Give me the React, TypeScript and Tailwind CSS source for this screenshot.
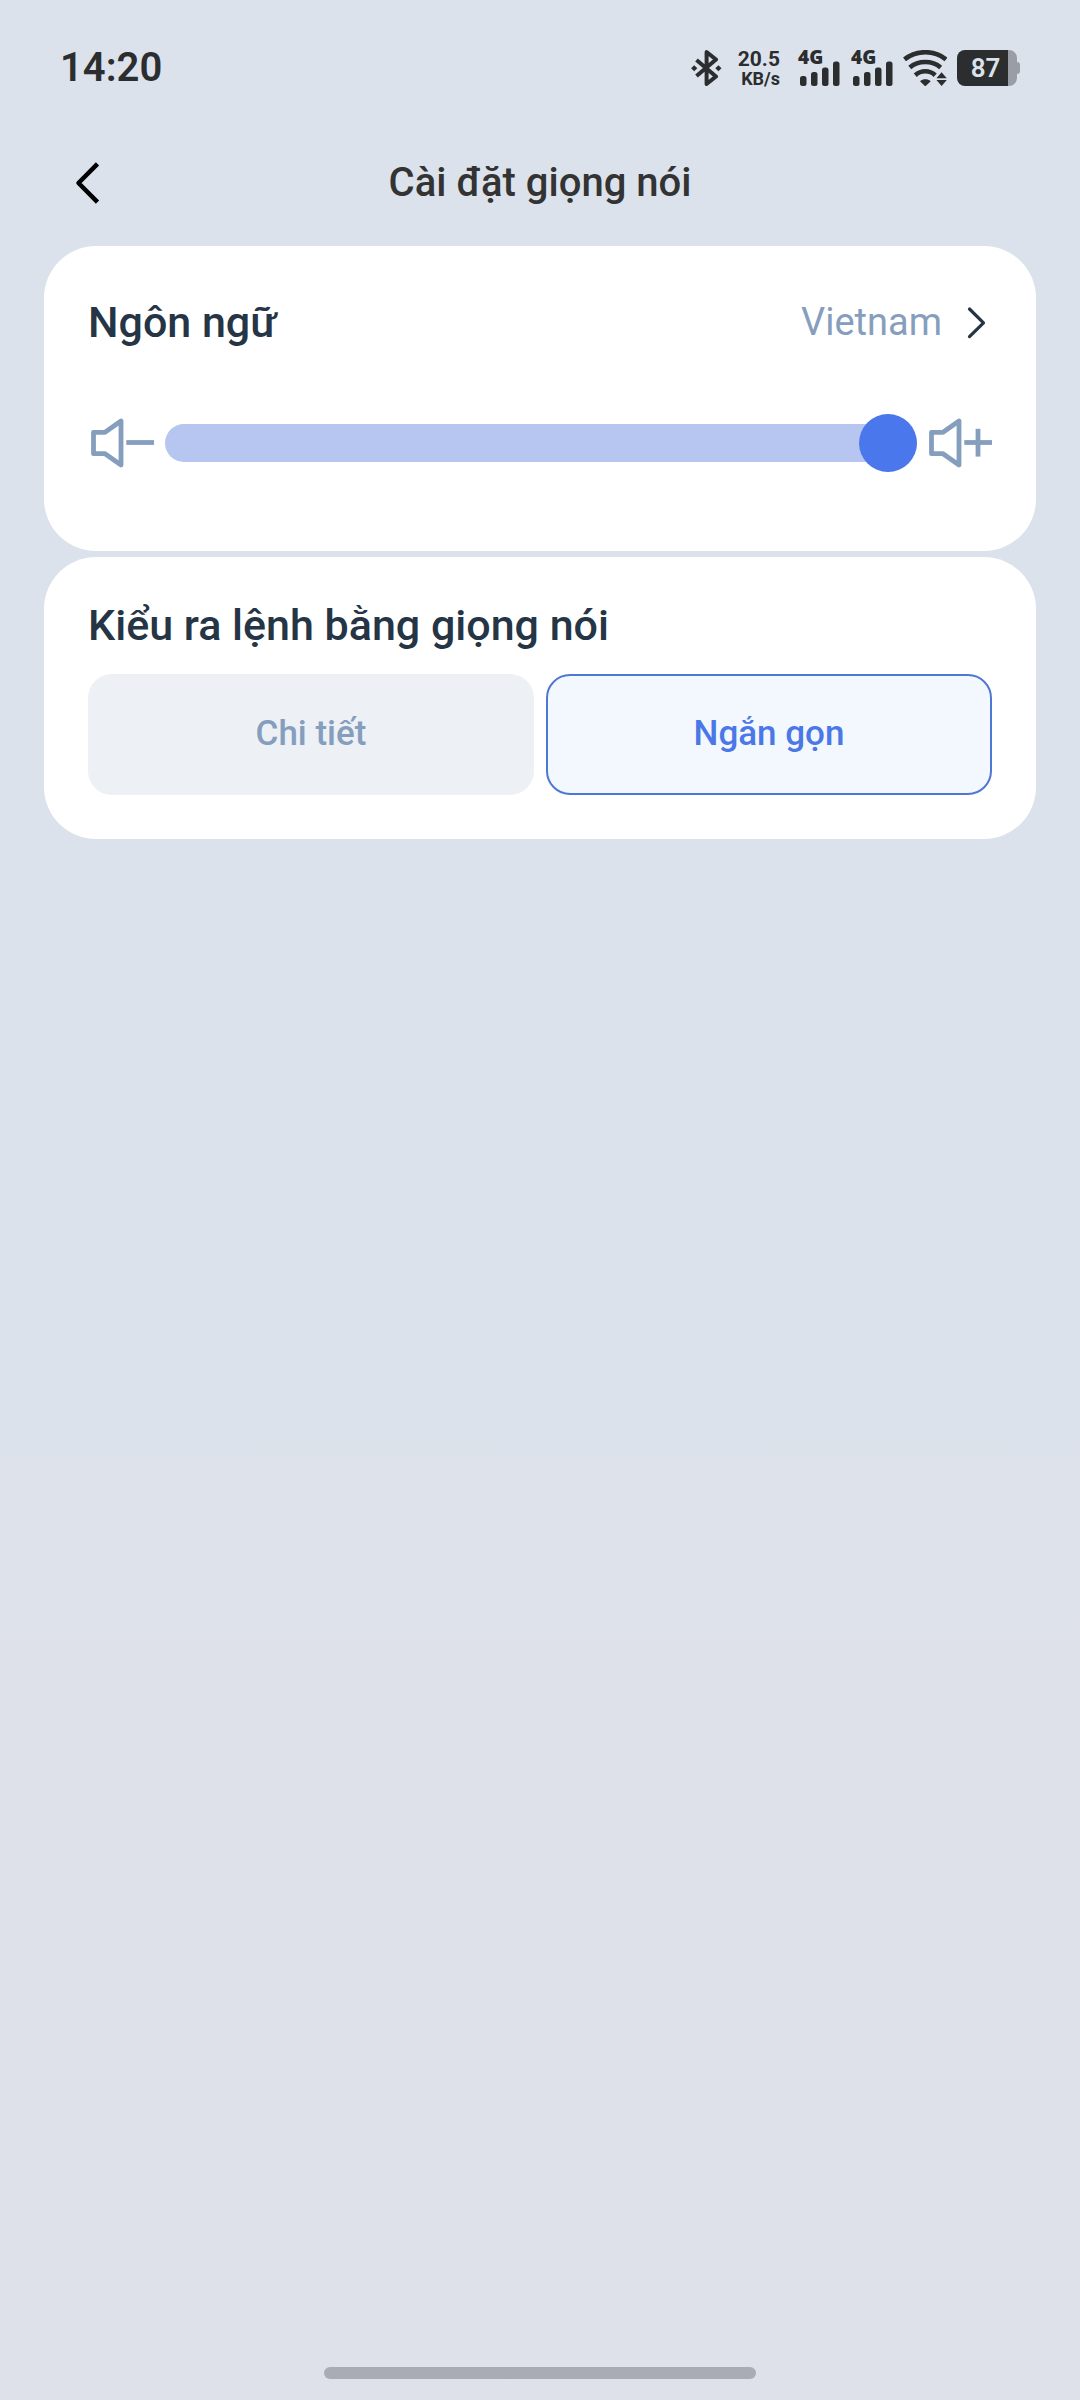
import { useState } from 'react';

type CommandStyle = 'detailed' | 'short';

const commandStyles: { id: CommandStyle; label: string }[] = [
  { id: 'detailed', label: 'Chi tiết' },
  { id: 'short', label: 'Ngắn gọn' },
];

function BluetoothIcon() {
  return (
    <svg className="h-9 w-[31px]" viewBox="0 0 31 36" fill="none" aria-hidden="true">
      <path
        d="M5.5 10L25 26.5L15.6 34V2L25 9.5L5.5 26"
        stroke="#2b2d2f"
        strokeWidth="4"
        strokeLinejoin="round"
      />
      <path d="M3.2 15.2l3.1 3-3.1 3-3.1-3zM27.4 15.2l3.1 3-3.1 3-3.1-3z" fill="#2b2d2f" />
    </svg>
  );
}

function SignalIcon() {
  return (
    <div className="relative h-9 w-[42px]">
      <span className="absolute -top-[3px] left-0 font-['Open_Sans',sans-serif] text-[19px] leading-5 font-extrabold">
        4G
      </span>
      <svg className="h-9 w-[42px]" viewBox="0 0 42 36" fill="#2b2d2f" aria-hidden="true">
        <rect x="2" y="26" width="6.5" height="10" rx="2.5" />
        <rect x="13" y="22" width="6.5" height="14" rx="2.5" />
        <rect x="24" y="17.5" width="6.5" height="18.5" rx="2.5" />
        <rect x="35" y="11.5" width="6.5" height="24.5" rx="2.5" />
      </svg>
    </div>
  );
}

function WifiIcon() {
  return (
    <svg className="h-9 w-11" viewBox="0 0 44 36" fill="none" aria-hidden="true">
      <g stroke="#2b2d2f" strokeWidth="4.6">
        <path d="M1.5 9.4C13.5 -0.2 31.5 -0.2 43 9.4" />
        <path d="M6.8 17.4C15.2 10.2 29.2 10.2 37.7 17.4" />
        <path d="M12.3 25.2C18 20 26.5 20 32.2 25.2" />
      </g>
      <path d="M17 31.2C20.3 28.6 24.4 28.6 27.7 31.2L22.3 36.4z" fill="#2b2d2f" />
      <path d="M38.6 22.3L43.8 28.2H33.4zM33.4 30H43.8L38.6 36z" fill="#2b2d2f" />
    </svg>
  );
}

function Battery({ level }: { level: number }) {
  return (
    <div className="relative h-9 w-[63px]">
      <svg className="h-9 w-[63px]" viewBox="0 0 63 36" aria-hidden="true">
        <path d="M51 0h1a8 8 0 0 1 8 8v4q3 0 3 3v6q0 3-3 3v4a8 8 0 0 1-8 8h-1z" fill="#9a9da5" />
        <path d="M8 0H51V36H8a8 8 0 0 1-8-8V8a8 8 0 0 1 8-8z" fill="#2b2d2f" />
      </svg>
      <span className="absolute inset-y-0 right-1.5 left-0 text-center text-[26px] leading-9 font-semibold text-[#dbe2eb]">
        {level}
      </span>
    </div>
  );
}

function StatusBar() {
  return (
    <div className="flex h-[136px] items-center justify-between px-15 text-[#2b2d2f]">
      <span className="text-[40px] font-semibold">14:20</span>
      <div className="flex items-center">
        <BluetoothIcon />
        <div className="mr-[18px] ml-4 pt-0.5 text-right font-bold">
          <div className="text-[21px] leading-5">20.5</div>
          <div className="text-[18px] leading-5">KB/s</div>
        </div>
        <SignalIcon />
        <div className="w-[11px]" />
        <SignalIcon />
        <div className="w-[10px]" />
        <WifiIcon />
        <div className="w-[10px]" />
        <Battery level={87} />
      </div>
    </div>
  );
}

function SpeakerIcon({ plus = false }: { plus?: boolean }) {
  return (
    <svg
      className="h-[50px] w-16 shrink-0"
      viewBox="0 0 64 50"
      fill="none"
      stroke="#869ebd"
      strokeWidth="4.8"
      aria-hidden="true"
    >
      <path d="M3.5 14.3H15L31 3V47L15 35.7H3.5Z" strokeLinejoin="round" />
      <path d="M36.3 24.5H64" />
      {plus && <path d="M50 10.8V38.6" />}
    </svg>
  );
}

export default function App() {
  const [volume, setVolume] = useState(100);
  const [commandStyle, setCommandStyle] = useState<CommandStyle>('short');

  return (
    <div className="flex min-h-screen flex-col bg-linear-to-b from-[#dbe2eb] from-55% to-[#dee1ea] to-70% font-[Roboto,sans-serif]">
      <StatusBar />

      <header className="grid h-[94px] grid-cols-[1fr_auto_1fr] items-center px-15">
        <button type="button" aria-label="Quay lại" className="flex size-14 items-center justify-center">
          <svg className="size-14" viewBox="0 0 56 56" fill="none" aria-hidden="true">
            <path d="M37.5 8.8L18.5 28L37.5 47.2" stroke="#000" strokeWidth="4.5" strokeLinejoin="round" />
          </svg>
        </button>
        <h1 className="text-[40px] font-medium text-[#333333]">Cài đặt giọng nói</h1>
      </header>

      <main className="flex flex-1 flex-col gap-1.5 px-11 pt-4">
        <section className="rounded-[52px] bg-white px-11 pt-11 pb-[79px]">
          <div className="flex h-16 items-center justify-between">
            <h2 className="text-[43px] font-medium text-[#253545]">Ngôn ngữ</h2>
            <button type="button" className="flex items-center gap-[18px] text-[38px] text-[#869ebd]">
              Vietnam
              <svg className="h-10 w-8" viewBox="0 0 32 40" fill="none" aria-hidden="true">
                <path
                  d="M9.5 7L23.5 20.8L9.5 34.6"
                  stroke="#253545"
                  strokeWidth="3.2"
                  strokeLinecap="round"
                  strokeLinejoin="round"
                />
              </svg>
            </button>
          </div>

          {/* Volume */}
          <div className="mt-15 flex items-center gap-[11px] pl-0.5">
            <SpeakerIcon />
            <input
              type="range"
              min={0}
              max={100}
              value={volume}
              onChange={(e) => setVolume(Number(e.target.value))}
              aria-label="Âm lượng"
              className="h-[58px] min-w-0 flex-1 cursor-pointer appearance-none bg-transparent [&::-webkit-slider-runnable-track]:h-[38px] [&::-webkit-slider-runnable-track]:rounded-full [&::-webkit-slider-runnable-track]:bg-[#b6c6f1] [&::-webkit-slider-thumb]:-mt-[10px] [&::-webkit-slider-thumb]:size-[58px] [&::-webkit-slider-thumb]:appearance-none [&::-webkit-slider-thumb]:rounded-full [&::-webkit-slider-thumb]:bg-[#4a78ec]"
            />
            <SpeakerIcon plus />
          </div>
        </section>

        <section className="rounded-[52px] bg-white px-11 pt-9 pb-11">
          <h2 className="text-[43px] leading-16 font-medium text-[#253545]">Kiểu ra lệnh bằng giọng nói</h2>
          <div className="mt-[17px] flex gap-3">
            {commandStyles.map((style) => (
              <button
                key={style.id}
                type="button"
                aria-pressed={commandStyle === style.id}
                onClick={() => setCommandStyle(style.id)}
                className={`h-[121px] flex-1 rounded-3xl border-2 text-[35px] font-medium ${
                  commandStyle === style.id
                    ? 'border-[#4f78d4] bg-[#f3f7fe] text-[#4a78e6]'
                    : 'border-[#edf1f6] bg-[#edf1f6] text-[#869ebd]'
                }`}
              >
                {style.label}
              </button>
            ))}
          </div>
        </section>
      </main>

      {/* Home indicator */}
      <div className="mb-[21px] h-3 w-2/5 self-center rounded-full bg-[#a9acb5]" />
    </div>
  );
}
